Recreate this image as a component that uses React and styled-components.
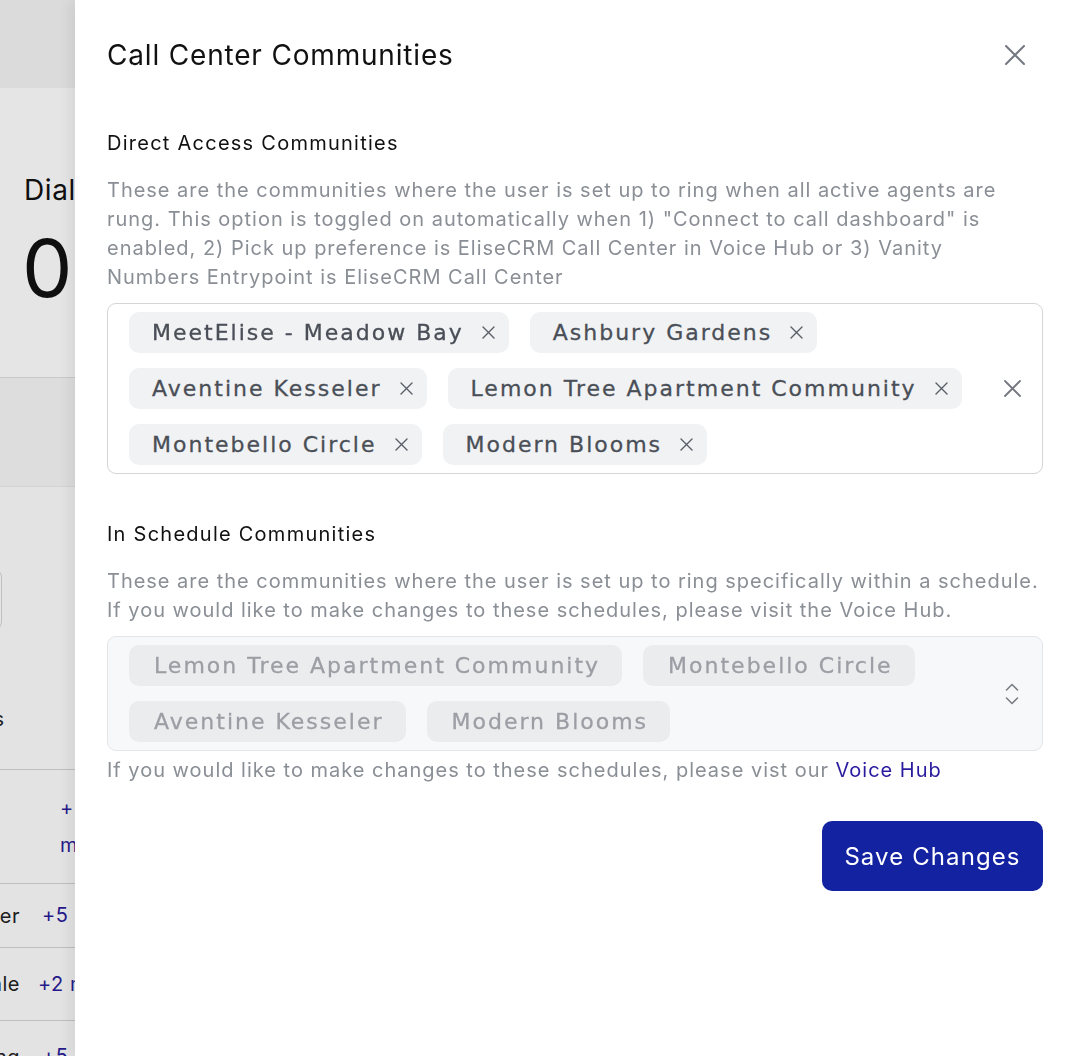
import React from 'react';
import styled, { createGlobalStyle } from 'styled-components';

const GlobalStyle = createGlobalStyle`
  html, body { margin: 0; padding: 0; }
  body {
    font-family: Inter, "Liberation Sans", sans-serif;
    background: #ffffff;
    overflow: hidden;
  }
  * { box-sizing: border-box; }
`;

/* ---------- background page ---------- */
const Page = styled.div`
  width: 1073px;
  height: 1056px;
  display: flex;
  flex-direction: column;
  background: #ffffff;
  overflow: hidden;
`;
const TopBar = styled.div`
  height: 88px;
  background: #f4f4f4;
  flex-shrink: 0;
`;
const StatCard = styled.div`
  height: 290px;
  flex-shrink: 0;
  background: #ffffff;
  border-bottom: 1px solid #e0e0e0;
  padding: 82px 24px 0;
  display: flex;
  flex-direction: column;
  gap: 10px;
`;
const StatLabel = styled.div`
  font-size: 28px;
  line-height: 40px;
  color: #111;
  letter-spacing: 0.6px;
  white-space: nowrap;
`;
const StatValue = styled.div`
  font-size: 80px;
  line-height: 96px;
  color: #111;
  margin-left: -2px;
`;
const Band = styled.div`
  height: 108px;
  flex-shrink: 0;
  background: #f6f6f6;
`;
const Content = styled.div`
  flex: 1;
  background: #fdfdfd;
  border-top: 1px solid #ececec;
  padding-top: 82px;
  display: flex;
  flex-direction: column;
`;
const SearchBox = styled.div`
  width: 120px;
  height: 61px;
  margin-left: -118px;
  border: 1px solid #d6d6d6;
  border-radius: 8px;
  background: #fff;
`;
const FilterRow = styled.div`
  width: 4px;
  margin-top: 77px;
  height: 30px;
  display: flex;
  justify-content: flex-end;
  font-size: 20px;
  color: #222;
  white-space: nowrap;
`;
const Table = styled.div`
  margin-top: 32px;
  display: flex;
  flex-direction: column;
`;
const Row = styled.div`
  display: grid;
  grid-template-columns: 20px 1fr;
  column-gap: ${p => p.$gap || 22}px;
  align-items: center;
  height: ${p => p.$h}px;
  border-top: 1px solid #d4d4d4;
  font-size: 20px;
  letter-spacing: 0.5px;
`;
const NameCell = styled.div`
  display: flex;
  justify-content: flex-end;
  white-space: nowrap;
  color: #222;
`;
const MoreCell = styled.div`
  color: #2a1c9a;
  line-height: 37px;
  white-space: ${p => (p.$wrap ? 'normal' : 'nowrap')};
  padding-left: ${p => p.$pad || 0}px;
  width: ${p => (p.$wrap ? '60px' : 'auto')};
`;

/* ---------- overlay + drawer ---------- */
const Overlay = styled.div`
  position: fixed;
  inset: 0;
  background: rgba(0, 0, 0, 0.1);
`;
const Drawer = styled.aside`
  position: fixed;
  top: 0;
  right: 0;
  bottom: 0;
  width: 998px;
  background: #ffffff;
  box-shadow: -6px 0 14px rgba(0, 0, 0, 0.07);
  padding: 31px 30px 0 32px;
  display: flex;
  flex-direction: column;
`;
const Header = styled.header`
  height: 48px;
  display: flex;
  align-items: center;
  justify-content: space-between;
`;
const Title = styled.h2`
  margin: 0;
  font-size: 28px;
  font-weight: 400;
  color: #111;
  letter-spacing: 0.82px;
`;
const IconButton = styled.button`
  width: 40px;
  height: 40px;
  margin-right: 8px;
  border: 0;
  background: transparent;
  display: flex;
  align-items: center;
  justify-content: center;
  padding: 0;
  cursor: pointer;
`;
const Section = styled.section`
  margin-top: ${p => p.$top}px;
  display: flex;
  flex-direction: column;
`;
const SectionLabel = styled.div`
  font-size: 20px;
  line-height: 28px;
  color: #111;
  letter-spacing: 1.25px;
`;
const Description = styled.p`
  margin: 19px 0 0;
  font-size: 20px;
  line-height: 29px;
  color: #8a8e95;
  letter-spacing: 0.98px;
  white-space: nowrap;
`;
const SelectBox = styled.div`
  margin-top: ${p => p.$top}px;
  border: 1px solid ${p => (p.$disabled ? '#e4e5e8' : '#d3d5d9')};
  background: ${p => (p.$disabled ? '#f7f8fa' : '#ffffff')};
  border-radius: 9px;
  display: flex;
  align-items: center;
  padding: 8px 0 8px 21px;
`;
const ChipList = styled.div`
  flex: 1;
  display: flex;
  flex-wrap: wrap;
  gap: 15px 21px;
`;
const Chip = styled.span`
  height: 41px;
  display: inline-flex;
  align-items: center;
  gap: 18px;
  padding: 0 ${p => (p.$disabled ? 22 : 14)}px 0 ${p => (p.$disabled ? 25 : 23)}px;
  border-radius: 10px;
  background: ${p => (p.$disabled ? '#ebecee' : '#f1f2f4')};
  color: ${p => (p.$disabled ? '#9b9ea4' : '#4a4f57')};
  font-family: "DejaVu Sans", "Open Sans", sans-serif;
  font-weight: 400;
  font-size: 22px;
  letter-spacing: 2px;
  -webkit-text-stroke: 0.3px currentColor;
  white-space: nowrap;
`;
const ChipRemove = styled.span`
  display: inline-flex;
  width: 13px;
  height: 13px;
`;
const Indicator = styled.div`
  width: 60px;
  display: flex;
  align-items: center;
  justify-content: center;
  flex-shrink: 0;
`;
const Helper = styled.p`
  margin: 5px 0 0;
  font-size: 20px;
  line-height: 29px;
  color: #8a8e95;
  letter-spacing: 0.99px;
  white-space: nowrap;
`;
const Link = styled.a`
  color: #2a1c9e;
  text-decoration: none;
`;
const Footer = styled.div`
  margin-top: 36px;
  display: flex;
  justify-content: flex-end;
`;
const PrimaryButton = styled.button`
  width: 221px;
  height: 70px;
  border: 0;
  border-radius: 10px;
  background: #1322a0;
  color: #fff;
  font-family: Inter, "Liberation Sans", sans-serif;
  font-size: 24px;
  letter-spacing: 1.1px;
  cursor: pointer;
`;

/* ---------- icons ---------- */
const XIcon = ({ size, stroke, width = 1.6 }) => (
  <svg width={size} height={size} viewBox={`0 0 ${size} ${size}`} fill="none">
    <path d={`M1 1L${size - 1} ${size - 1}M${size - 1} 1L1 ${size - 1}`} stroke={stroke} strokeWidth={width} strokeLinecap="round" />
  </svg>
);
const UpDownIcon = () => (
  <svg width="14" height="24" viewBox="0 0 14 24" fill="none">
    <path d="M1.5 8L7 2.5L12.5 8M1.5 16L7 21.5L12.5 16" stroke="#7a7e86" strokeWidth="1.6" strokeLinecap="round" strokeLinejoin="round" />
  </svg>
);

const direct = [
  'MeetElise - Meadow Bay',
  'Ashbury Gardens',
  'Aventine Kesseler',
  'Lemon Tree Apartment Community',
  'Montebello Circle',
  'Modern Blooms',
];
const scheduled = ['Lemon Tree Apartment Community', 'Montebello Circle', 'Aventine Kesseler', 'Modern Blooms'];

export default function App() {
  return (
    <>
      <GlobalStyle />
      <Page>
        <TopBar />
        <StatCard>
          <StatLabel>Dialed Calls</StatLabel>
          <StatValue>0</StatValue>
        </StatCard>
        <Band />
        <Content>
          <SearchBox />
          <FilterRow>Communities</FilterRow>
          <Table>
            <Row $h={114} $gap={38}>
              <NameCell />
              <MoreCell $wrap $pad={2}>+ more</MoreCell>
            </Row>
            <Row $h={64}>
              <NameCell>Manager</NameCell>
              <MoreCell>+5 more</MoreCell>
            </Row>
            <Row $h={73} $gap={18}>
              <NameCell>Sale</NameCell>
              <MoreCell>+2 more</MoreCell>
            </Row>
            <Row $h={72}>
              <NameCell>Leasing</NameCell>
              <MoreCell>+5 more</MoreCell>
            </Row>
          </Table>
        </Content>
      </Page>
      <Overlay />
      <Drawer>
        <Header>
          <Title>Call Center Communities</Title>
          <IconButton aria-label="Close">
            <XIcon size={20} stroke="#747880" width={2} />
          </IconButton>
        </Header>

        <Section $top={50}>
          <SectionLabel>Direct Access Communities</SectionLabel>
          <Description>
            These are the communities where the user is set up to ring when all active agents are
            <br />
            rung. This option is toggled on automatically when 1) "Connect to call dashboard" is
            <br />
            enabled, 2) Pick up preference is EliseCRM Call Center in Voice Hub or 3) Vanity
            <br />
            Numbers Entrypoint is EliseCRM Call Center
          </Description>
          <SelectBox $top={11}>
            <ChipList>
              {direct.map(name => (
                <Chip key={name}>
                  {name}
                  <ChipRemove>
                    <XIcon size={13} stroke="#5a5f67" width={1.4} />
                  </ChipRemove>
                </Chip>
              ))}
            </ChipList>
            <Indicator>
              <XIcon size={17} stroke="#747880" width={1.8} />
            </Indicator>
          </SelectBox>
        </Section>

        <Section $top={46}>
          <SectionLabel>In Schedule Communities</SectionLabel>
          <Description>
            These are the communities where the user is set up to ring specifically within a schedule.
            <br />
            If you would like to make changes to these schedules, please visit the Voice Hub.
          </Description>
          <SelectBox $top={11} $disabled>
            <ChipList>
              {scheduled.map(name => (
                <Chip key={name} $disabled>
                  {name}
                </Chip>
              ))}
            </ChipList>
            <Indicator>
              <UpDownIcon />
            </Indicator>
          </SelectBox>
          <Helper>
            If you would like to make changes to these schedules, please vist our <Link href="#">Voice Hub</Link>
          </Helper>
        </Section>

        <Footer>
          <PrimaryButton>Save Changes</PrimaryButton>
        </Footer>
      </Drawer>
    </>
  );
}
